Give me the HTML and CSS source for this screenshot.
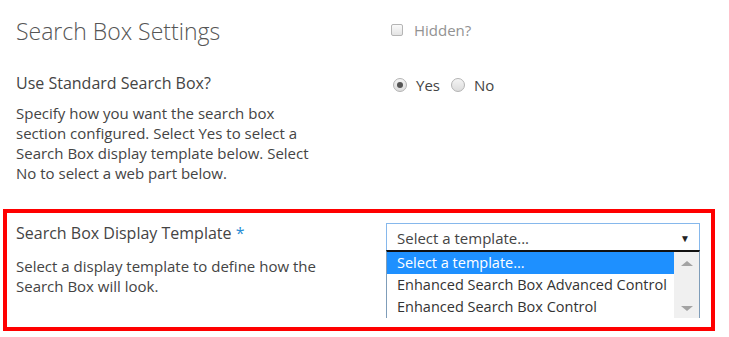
FILE: index.html
```html
<!DOCTYPE html>
<html lang="en">
<head>
    <meta charset="UTF-8">
    <title>Search Box Settings</title>
    <link rel="stylesheet" href="styles.css">
</head>
<body>
    <div class="row row-head">
        <h1 class="title">Search Box Settings</h1>
        <div class="field">
            <label class="check">
                <span class="box"></span>
                <span class="check-text">Hidden?</span>
            </label>
        </div>
    </div>

    <div class="row">
        <div>
            <h2 class="label">Use Standard Search Box?</h2>
            <p class="desc">Specify how you want the search box section configured. Select Yes to select a Search Box display template below. Select No to select a web part below.</p>
        </div>
        <div class="field radios">
            <label class="radio"><span class="dot checked"></span>Yes</label>
            <label class="radio"><span class="dot"></span>No</label>
        </div>
    </div>

    <div class="row highlight">
        <div>
            <h2 class="label">Search Box Display Template <span class="req">*</span></h2>
            <p class="desc">Select a display template to define how the Search Box will look.</p>
        </div>
        <div class="field">
            <div class="select">
                <span>Select a template...</span>
                <span class="arrow">&#9660;</span>
            </div>
            <div class="listbox">
                <ul class="options">
                    <li class="selected">Select a template...</li>
                    <li>Enhanced Search Box Advanced Control</li>
                    <li>Enhanced Search Box Control</li>
                </ul>
                <div class="scrollbar">
                    <span class="up"></span>
                    <span class="down"></span>
                </div>
            </div>
        </div>
    </div>
</body>
</html>
```

FILE: styles.css
```css
* {
    margin: 0;
    padding: 0;
    box-sizing: border-box;
}

body {
    font-family: "Open Sans", "Segoe UI", sans-serif;
    color: #444;
    background: #fff;
    width: 729px;
    height: 337px;
    overflow: hidden;
}

.row {
    display: grid;
    grid-template-columns: 370px 314px;
    width: 712px;
    margin-left: 3px;
    padding: 0 9px;
    border: 4px solid transparent;
}

.row-head {
    padding-top: 11px;
    height: 52px;
}

.title {
    font-size: 23px;
    line-height: 32px;
    font-weight: 300;
    color: #555;
}

.label {
    font-size: 16px;
    line-height: 24px;
    font-weight: 400;
    padding-top: 15px;
}

.desc {
    font-size: 15px;
    line-height: 20px;
    margin-top: 8px;
    width: 300px;
}

/* checkbox */
.check {
    display: flex;
    align-items: center;
    margin-left: 5px;
    margin-top: 5px;
    gap: 11px;
}

.box {
    width: 12px;
    height: 12px;
    border: 1px solid #b5b5b5;
    border-radius: 2px;
    background: linear-gradient(#fafafa, #e4e4e4);
}

.check-text {
    font-size: 15px;
    line-height: 20px;
    color: #929292;
}

/* radios */
.radios {
    display: flex;
    align-items: center;
    height: 58px;
    margin-left: 7px;
    font-size: 15px;
}

.radio {
    display: flex;
    align-items: center;
    gap: 9px;
    margin-right: 11px;
}

.dot {
    width: 14px;
    height: 14px;
    border: 1px solid #b3b3b3;
    border-radius: 50%;
    background: linear-gradient(#f4f4f4, #dcdcdc);
    position: relative;
}

.dot.checked::after {
    content: "";
    position: absolute;
    left: 3px;
    top: 3px;
    width: 6px;
    height: 6px;
    border-radius: 50%;
    background: #555;
}

/* highlighted row */
.highlight {
    margin-top: 22px;
    border-color: #f00;
    height: 122px;
}

.highlight .label {
    padding-top: 8px;
}

.highlight .desc {
    margin-top: 11px;
}

.req {
    color: #2a8dd4;
}

.field {
    padding-top: 10px;
}

.row-head .field,
.radios {
    padding-top: 0;
}

.select {
    display: flex;
    justify-content: space-between;
    align-items: center;
    height: 27px;
    padding: 2px 10px 0 10px;
    border: 1px solid #86b8ec;
    border-bottom: none;
    font-size: 15px;
    color: #444;
}

.arrow {
    font-size: 10px;
    color: #222;
    margin-right: -1px;
}

.listbox {
    display: flex;
    height: 68px;
    border-top: 2px solid #111;
    border-left: 1px solid #7f9db9;
    border-right: 1px solid #7f9db9;
}

.options {
    list-style: none;
    flex: 1;
    font-size: 14.5px;
    line-height: 22px;
    color: #333;
}

.options li {
    padding-left: 10px;
    white-space: nowrap;
    overflow: hidden;
}

.options .selected {
    background: #1e90ff;
    color: #fff;
}

.scrollbar {
    width: 25px;
    background: #f0f0f0;
    display: flex;
    flex-direction: column;
    justify-content: space-between;
    align-items: center;
    padding: 9px 0 7px;
}

.up,
.down {
    width: 0;
    height: 0;
    border-left: 6px solid transparent;
    border-right: 6px solid transparent;
}

.up {
    border-bottom: 5px solid #a3a3a3;
}

.down {
    border-top: 5px solid #a3a3a3;
}
```
